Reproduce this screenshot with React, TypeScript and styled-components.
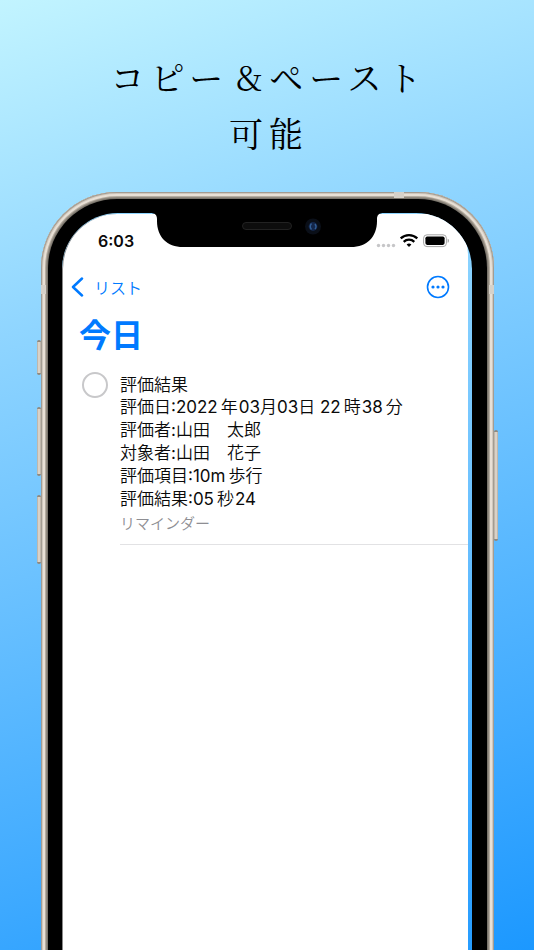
import React from "react";
import styled, { createGlobalStyle } from "styled-components";

const GlobalStyle = createGlobalStyle`
  * { box-sizing: border-box; }
  body {
    margin: 0;
    font-family: Inter, "Noto Sans CJK JP", sans-serif;
    color: #0a0a0a;
  }
`;

const Page = styled.div`
  display: flex;
  flex-direction: column;
  min-height: 100vh;
  overflow: hidden;
  background: linear-gradient(162deg, #c2f4ff 0%, #8fd5ff 30%, #6cc2ff 52%, #3faaff 80%, #1c98ff 100%);
`;

const Headline = styled.h1`
  margin: 0;
  padding: 49px 0 31px 4px;
  font-family: "Noto Serif CJK JP", "Noto Sans CJK JP", serif;
  font-size: 34px;
  font-weight: 400;
  line-height: 56px;
  letter-spacing: 6px;
  text-align: center;
  color: #000;
`;

const Ampersand = styled.span`
  display: inline-block;
  width: 40px;
  font-weight: 400;
  line-height: 34px;
  letter-spacing: 0;
`;

const Phone = styled.div`
  position: relative;
  display: flex;
  flex: 1;
  margin: 0 40px -8px 41px;
  padding: 7px 7px 0;
  border-radius: 76px 76px 0 0;
  background: #7a756c;
  box-shadow: inset 0 0 0 1px #a39c92, inset 0 0 0 2px #cfc7bc, inset 0 0 0 4px #e8e0d6,
    inset 0 0 0 5px #b5ada1, inset 0 0 0 6px #918a80;
`;

const SideButton = styled.span<{ $side: "left" | "right"; $top: number; $length: number }>`
  position: absolute;
  ${(p) => p.$side}: -4px;
  top: ${(p) => p.$top}px;
  width: 4px;
  height: ${(p) => p.$length}px;
  border: solid #8f887e;
  border-width: 2px 0;
  border-radius: 2px;
  background: linear-gradient(90deg, #b2aa9e, #e6ded4 50%, #b2aa9e);
`;

const AntennaTop = styled.span`
  position: absolute;
  top: 0;
  right: 90px;
  width: 10px;
  height: 6px;
  background: #d6d1c9;
`;

const AntennaSide = styled.span<{ $side: "left" | "right" }>`
  position: absolute;
  ${(p) => p.$side}: 0;
  top: 93px;
  width: 5px;
  height: 9px;
  background: #d6d1c9;
`;

const Bezel = styled.div`
  display: flex;
  flex: 1;
  padding: 14px 15px 0 14px;
  border-radius: 69px 69px 0 0;
  background: #000;
`;

const Glass = styled.div`
  position: relative;
  display: flex;
  flex: 1;
  padding: 1px 4px 0 0;
  overflow: hidden;
  border-radius: 56px 56px 0 0;
  background: linear-gradient(180deg, #8ed5ff, #6cc1ff 40%, #259cff);
`;

const Screen = styled.main`
  flex: 1;
  min-width: 0;
  border-left: 1px solid #8a8a8a;
  border-radius: 55px 40px 0 0;
  background: #fff;
`;

const Notch = styled.svg`
  position: absolute;
  top: 0;
  left: 50%;
  width: 234px;
  height: 35px;
  transform: translateX(-50%);
`;

const StatusBar = styled.div`
  display: flex;
  align-items: center;
  justify-content: space-between;
  height: 53px;
  padding: 0 19px 0 35px;
`;

const Clock = styled.time`
  font-size: 16px;
  font-weight: 600;
  line-height: 20px;
`;

const StatusIcons = styled.svg`
  width: 74px;
  height: 16px;
`;

const NavBar = styled.nav`
  display: flex;
  align-items: center;
  justify-content: space-between;
  height: 40px;
  padding: 0 18px 0 7px;
`;

const BackLink = styled.a`
  display: flex;
  align-items: center;
  gap: 10px;
  color: #007aff;
  font-size: 16px;
  line-height: 24px;
  text-decoration: none;
`;

const MoreButton = styled.button`
  display: flex;
  padding: 0;
  border: 0;
  background: none;
`;

const ListTitle = styled.h2`
  margin: 0;
  padding: 5px 16px 0;
  color: #007aff;
  font-size: 32px;
  font-weight: 700;
  line-height: 48px;
`;

const Task = styled.article`
  display: flex;
  gap: 12px;
  padding: 12px 0 0 19px;
`;

const TaskCheck = styled.input`
  flex: none;
  appearance: none;
  width: 26px;
  height: 26px;
  margin: 0;
  border: 2px solid #c8c8ca;
  border-radius: 50%;
  background: #fff;
`;

const TaskBody = styled.div`
  flex: 1;
  min-width: 0;
  padding: 3px 0 9px;
  border-bottom: 1px solid #e2e2e4;
  font-size: 17px;
  line-height: 23px;
  white-space: nowrap;
`;

const Kanji = styled.span`
  font-family: "Noto Sans CJK JP DemiLight", "Noto Sans CJK JP", sans-serif;
  font-weight: 350;
  line-height: 1;
`;

const Unit = styled(Kanji)`
  margin: 0 1px 0 3px;
`;

const TaskName = styled.label`
  display: block;
  line-height: 21px;
`;

const Line = styled.div``;

const ListName = styled.div`
  padding-top: 2px;
  color: #8e8e93;
  font-size: 15px;
  line-height: 22px;
`;

export default function App() {
  return (
    <Page>
      <GlobalStyle />
      <Headline>
        コピー<Ampersand>&amp;</Ampersand>ペースト
        <br />
        可能
      </Headline>
      <Phone>
        <SideButton $side="left" $top={148} $length={35} />
        <SideButton $side="left" $top={215} $length={69} />
        <SideButton $side="left" $top={303} $length={69} />
        <SideButton $side="right" $top={238} $length={111} />
        <AntennaTop />
        <AntennaSide $side="left" />
        <AntennaSide $side="right" />
        <Bezel>
          <Glass>
            <Screen>
              <StatusBar>
                <Clock>6:03</Clock>
                <StatusIcons viewBox="0 0 74 16" aria-hidden="true">
                  <g fill="#c6c6c8">
                    <circle cx="3.5" cy="12.5" r="1.7" />
                    <circle cx="8.5" cy="12.5" r="1.7" />
                    <circle cx="13.5" cy="12.5" r="1.7" />
                    <circle cx="18.5" cy="12.5" r="1.7" />
                  </g>
                  <g fill="none" stroke="#000" strokeWidth="2.3">
                    <path d="M25.7 5.3a12.2 12.2 0 0 1 16.6 0" />
                    <path d="M28.7 8.8a7.8 7.8 0 0 1 10.6 0" />
                  </g>
                  <path d="M31.6 11.5a3.8 3.8 0 0 1 4.8 0L34 14.1z" fill="#000" />
                  <rect x="48.6" y="1.8" width="22.8" height="11.8" rx="3.4" fill="none" stroke="#a5a5a5" />
                  <rect x="50.4" y="3.5" width="19.2" height="8.4" rx="1.8" fill="#000" />
                  <path d="M72.7 5.7c1.6.7 1.6 3.3 0 4z" fill="#999" />
                </StatusIcons>
              </StatusBar>
              <NavBar>
                <BackLink href="#lists">
                  <svg width="14" height="20" viewBox="0 0 14 20" aria-hidden="true">
                    <path d="M12 1.5 3 10l9 8.5" fill="none" stroke="#007aff" strokeWidth="2.5" strokeLinecap="round" strokeLinejoin="round" />
                  </svg>
                  <Kanji>リスト</Kanji>
                </BackLink>
                <MoreButton type="button" aria-label="その他">
                  <svg width="24" height="24" viewBox="0 0 24 24" aria-hidden="true">
                    <circle cx="12" cy="12" r="10.5" fill="none" stroke="#007aff" strokeWidth="1.6" />
                    <g fill="#007aff">
                      <circle cx="7" cy="12" r="1.6" />
                      <circle cx="12" cy="12" r="1.6" />
                      <circle cx="17" cy="12" r="1.6" />
                    </g>
                  </svg>
                </MoreButton>
              </NavBar>
              <ListTitle>今日</ListTitle>
              <Task>
                <TaskCheck type="checkbox" id="task" />
                <TaskBody>
                  <TaskName htmlFor="task">
                    <Kanji>評価結果</Kanji>
                  </TaskName>
                  <Line>
                    <Kanji>評価日</Kanji>:2022<Unit>年</Unit>03<Kanji>月</Kanji>03<Kanji>日</Kanji> 22<Unit>時</Unit>38<Unit>分</Unit>
                  </Line>
                  <Line>
                    <Kanji>評価者</Kanji>:<Kanji>山田　太郎</Kanji>
                  </Line>
                  <Line>
                    <Kanji>対象者</Kanji>:<Kanji>山田　花子</Kanji>
                  </Line>
                  <Line>
                    <Kanji>評価項目</Kanji>:10m<Unit>歩行</Unit>
                  </Line>
                  <Line>
                    <Kanji>評価結果</Kanji>:05<Unit>秒</Unit>24
                  </Line>
                  <ListName>
                    <Kanji>リマインダー</Kanji>
                  </ListName>
                </TaskBody>
              </Task>
            </Screen>
            <Notch viewBox="0 0 234 35" aria-hidden="true">
              <path d="M0 0H234C229 0 227 2 227 6V8C227 24 217 34 201 34H33C17 34 7 24 7 8V6C7 2 5 0 0 0Z" fill="#000" />
              <rect x="92.5" y="9.5" width="49" height="7" rx="3.5" fill="#0d0d0d" stroke="#292929" strokeWidth=".8" />
              <circle cx="163" cy="13.5" r="8" fill="#0a0f18" />
              <circle cx="163" cy="13.5" r="4.4" fill="#13264a" />
              <path d="M161.5 10.5q-2.5 3 0 6M165 11q2 2.5 0 5" fill="none" stroke="#315d94" strokeWidth="1.4" />
            </Notch>
          </Glass>
        </Bezel>
      </Phone>
    </Page>
  );
}
